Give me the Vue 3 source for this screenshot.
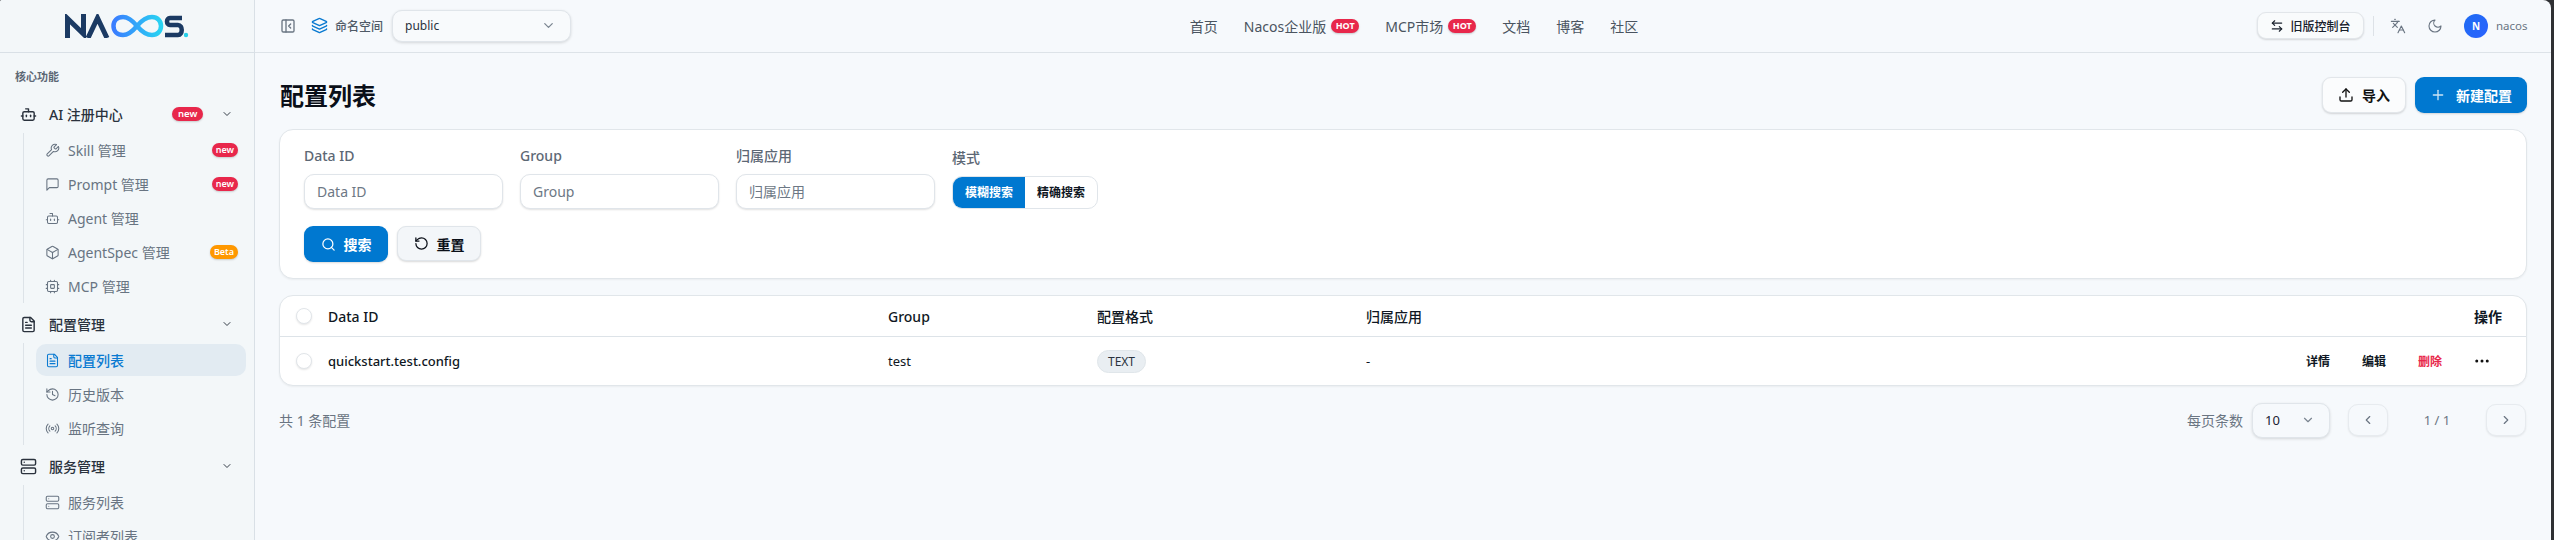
<script setup>
import { h } from 'vue'

const icons = {
  panel: '<rect x="3" y="3" width="18" height="18" rx="2"/><path d="M9 3v18"/><path d="m16 15-3-3 3-3"/>',
  layers: '<path d="M12.83 2.18a2 2 0 0 0-1.66 0L2.6 6.08a1 1 0 0 0 0 1.83l8.58 3.91a2 2 0 0 0 1.66 0l8.58-3.9a1 1 0 0 0 0-1.83z"/><path d="M2 12a1 1 0 0 0 .58.91l8.6 3.91a2 2 0 0 0 1.65 0l8.58-3.9A1 1 0 0 0 22 12"/><path d="M2 17a1 1 0 0 0 .58.91l8.6 3.91a2 2 0 0 0 1.65 0l8.58-3.9A1 1 0 0 0 22 17"/>',
  bot: '<path d="M12 8V4H8"/><rect x="4" y="8" width="16" height="12" rx="2"/><path d="M2 14h2"/><path d="M20 14h2"/><path d="M15 13v2"/><path d="M9 13v2"/>',
  wrench: '<path d="M14.7 6.3a1 1 0 0 0 0 1.4l1.6 1.6a1 1 0 0 0 1.4 0l3.77-3.77a6 6 0 0 1-7.94 7.94l-6.91 6.91a2.12 2.12 0 0 1-3-3l6.91-6.91a6 6 0 0 1 7.94-7.94l-3.76 3.76z"/>',
  message: '<path d="M21 15a2 2 0 0 1-2 2H7l-4 4V5a2 2 0 0 1 2-2h14a2 2 0 0 1 2 2z"/>',
  box: '<path d="M21 8a2 2 0 0 0-1-1.73l-7-4a2 2 0 0 0-2 0l-7 4A2 2 0 0 0 3 8v8a2 2 0 0 0 1 1.73l7 4a2 2 0 0 0 2 0l7-4A2 2 0 0 0 21 16Z"/><path d="m3.3 7 8.7 5 8.7-5"/><path d="M12 22V12"/>',
  cpu: '<rect x="4" y="4" width="16" height="16" rx="2"/><rect x="9" y="9" width="6" height="6" rx="1"/><path d="M15 2v2M15 20v2M2 15h2M2 9h2M20 15h2M20 9h2M9 2v2M9 20v2"/>',
  file: '<path d="M15 2H6a2 2 0 0 0-2 2v16a2 2 0 0 0 2 2h12a2 2 0 0 0 2-2V7Z"/><path d="M14 2v4a2 2 0 0 0 2 2h4"/><path d="M10 9H8"/><path d="M16 13H8"/><path d="M16 17H8"/>',
  history: '<path d="M3 12a9 9 0 1 0 9-9 9.75 9.75 0 0 0-6.74 2.74L3 8"/><path d="M3 3v5h5"/><path d="M12 7v5l4 2"/>',
  radio: '<path d="M4.9 19.1C1 15.2 1 8.8 4.9 4.9"/><path d="M7.8 16.2c-2.3-2.3-2.3-6.1 0-8.5"/><circle cx="12" cy="12" r="2"/><path d="M16.2 7.8c2.3 2.3 2.3 6.1 0 8.5"/><path d="M19.1 4.9C23 8.8 23 15.1 19.1 19"/>',
  server: '<rect x="2" y="2" width="20" height="8" rx="2"/><rect x="2" y="14" width="20" height="8" rx="2"/><path d="M6 6h.01"/><path d="M6 18h.01"/>',
  eye: '<path d="M2.062 12.348a1 1 0 0 1 0-.696 10.75 10.75 0 0 1 19.876 0 1 1 0 0 1 0 .696 10.75 10.75 0 0 1-19.876 0"/><circle cx="12" cy="12" r="3"/>',
  down: '<path d="m6 9 6 6 6-6"/>',
  left: '<path d="m15 18-6-6 6-6"/>',
  right: '<path d="m9 18 6-6-6-6"/>',
  swap: '<path d="M8 3 4 7l4 4"/><path d="M4 7h16"/><path d="m16 21 4-4-4-4"/><path d="M20 17H4"/>',
  lang: '<path d="m5 8 6 6"/><path d="m4 14 6-6 2-3"/><path d="M2 5h12"/><path d="M7 2h1"/><path d="m22 22-5-10-5 10"/><path d="M14 18h6"/>',
  moon: '<path d="M12 3a6 6 0 0 0 9 9 9 9 0 1 1-9-9Z"/>',
  upload: '<path d="M21 15v4a2 2 0 0 1-2 2H5a2 2 0 0 1-2-2v-4"/><path d="m17 8-5-5-5 5"/><path d="M12 3v12"/>',
  plus: '<path d="M5 12h14"/><path d="M12 5v14"/>',
  search: '<path d="m21 21-4.34-4.34"/><circle cx="11" cy="11" r="8"/>',
  reset: '<path d="M3 12a9 9 0 1 0 9-9 9.75 9.75 0 0 0-6.74 2.74L3 8"/><path d="M3 3v5h5"/>',
  dots: '<circle cx="12" cy="12" r="1"/><circle cx="19" cy="12" r="1"/><circle cx="5" cy="12" r="1"/>'
}

const Icon = (props) =>
  h('svg', {
    viewBox: '0 0 24 24',
    width: props.size || 16,
    height: props.size || 16,
    fill: 'none',
    stroke: 'currentColor',
    'stroke-width': props.sw || 2,
    'stroke-linecap': 'round',
    'stroke-linejoin': 'round',
    style: { flex: 'none', display: 'block' },
    innerHTML: icons[props.name]
  })
Icon.props = ['name', 'size', 'sw']

const groups = [
  {
    title: 'AI 注册中心', icon: 'bot', badge: 'new',
    items: [
      { label: 'Skill 管理', icon: 'wrench', badge: 'new' },
      { label: 'Prompt 管理', icon: 'message', badge: 'new' },
      { label: 'Agent 管理', icon: 'bot' },
      { label: 'AgentSpec 管理', icon: 'box', badge: 'Beta' },
      { label: 'MCP 管理', icon: 'cpu' }
    ]
  },
  {
    title: '配置管理', icon: 'file',
    items: [
      { label: '配置列表', icon: 'file', active: true },
      { label: '历史版本', icon: 'history' },
      { label: '监听查询', icon: 'radio' }
    ]
  },
  {
    title: '服务管理', icon: 'server',
    items: [
      { label: '服务列表', icon: 'server' },
      { label: '订阅者列表', icon: 'eye' }
    ]
  }
]

const navLinks = [
  { label: '首页' },
  { label: 'Nacos企业版', hot: true },
  { label: 'MCP市场', hot: true },
  { label: '文档' },
  { label: '博客' },
  { label: '社区' }
]

const fields = ['Data ID', 'Group', '归属应用']
</script>

<template>
  <div class="shell">
    <div class="window">
      <aside class="sidebar">
        <div class="logo">
          <svg width="124" height="24" viewBox="0 0 124 24" fill="none" aria-label="Nacos">
            <defs>
              <linearGradient id="inf" x1="0" y1="0" x2="1" y2="0">
                <stop offset="0" stop-color="#3a7dff" />
                <stop offset="1" stop-color="#28d3f2" />
              </linearGradient>
            </defs>
            <path d="M2.500 24V4.500L18.500 20V0" stroke="#1b3a63" stroke-width="5" />
            <path d="M23 24 32.500 4 42 24" stroke="#1b3a63" stroke-width="5" />
            <path d="M72 12C67 6 63 3 58 3 52 3 48.500 7 48.500 12S52 21 58 21C63 21 67 18 72 12S81 3 87 3C92.500 3 96 7 96 12S92.500 21 87 21C81 21 77 18 72 12Z" stroke="url(#inf)" stroke-width="4.500" />
            <path d="M117 4H105C101 4 101 11 105 11H113C118 11 118 21 113 21H100" stroke="#1b3a63" stroke-width="4.500" />
            <circle cx="121" cy="21" r="2.200" fill="#26cfe8" />
          </svg>
        </div>
        <div class="side-label">核心功能</div>
        <nav class="menu">
          <section v-for="g in groups" :key="g.title" class="group">
            <div class="group-head">
              <Icon :name="g.icon" :size="17" />
              <span class="group-title">{{ g.title }}</span>
              <span v-if="g.badge" class="badge badge-lg">{{ g.badge }}</span>
              <Icon name="down" :size="12" class="caret" />
            </div>
            <ul class="sub">
              <li v-for="it in g.items" :key="it.label" class="sub-item" :class="{ active: it.active }">
                <Icon :name="it.icon" :size="15" :sw="1.700" />
                <span class="sub-label">{{ it.label }}</span>
                <span v-if="it.badge" class="badge" :class="{ beta: it.badge === 'Beta' }">{{ it.badge }}</span>
              </li>
            </ul>
          </section>
        </nav>
      </aside>

      <div class="main">
        <header class="topbar">
          <div class="top-left">
            <Icon name="panel" :size="16" class="muted-icon" />
            <Icon name="layers" :size="17" class="blue-icon" />
            <span class="ns-label">命名空间</span>
            <div class="ns-select">
              <span>public</span>
              <Icon name="down" :size="15" class="select-caret" />
            </div>
          </div>
          <nav class="top-nav">
            <a v-for="l in navLinks" :key="l.label" class="top-link">
              {{ l.label }}<span v-if="l.hot" class="hot">HOT</span>
            </a>
          </nav>
          <div class="top-right">
            <button class="old-btn"><Icon name="swap" :size="14" />旧版控制台</button>
            <span class="divider"></span>
            <Icon name="lang" :size="16" :sw="1.700" class="muted-icon lang" />
            <Icon name="moon" :size="16" :sw="1.700" class="muted-icon moon" />
            <span class="avatar">N</span>
            <span class="user">nacos</span>
          </div>
        </header>

        <main class="content">
          <div class="page-head">
            <h1>配置列表</h1>
            <div class="page-actions">
              <button class="btn btn-light"><Icon name="upload" :size="16" />导入</button>
              <button class="btn btn-primary"><Icon name="plus" :size="16" class="plus" />新建配置</button>
            </div>
          </div>

          <section class="card filter">
            <div class="fields">
              <label v-for="f in fields" :key="f" class="field">
                <span class="field-label">{{ f }}</span>
                <input class="input" :placeholder="f" />
              </label>
              <div class="field mode">
                <span class="field-label">模式</span>
                <div class="seg">
                  <span class="seg-item on">模糊搜索</span>
                  <span class="seg-item">精确搜索</span>
                </div>
              </div>
            </div>
            <div class="filter-actions">
              <button class="btn btn-primary btn-search"><Icon name="search" :size="15" />搜索</button>
              <button class="btn btn-reset"><Icon name="reset" :size="15" />重置</button>
            </div>
          </section>

          <section class="card table">
            <div class="row row-head">
              <span class="check"></span>
              <span class="c-id">Data ID</span>
              <span class="c-group">Group</span>
              <span class="c-format">配置格式</span>
              <span class="c-app">归属应用</span>
              <span class="c-op">操作</span>
            </div>
            <div class="row row-body">
              <span class="check"></span>
              <span class="c-id strong">quickstart.test.config</span>
              <span class="c-group">test</span>
              <span class="c-format"><span class="tag">TEXT</span></span>
              <span class="c-app">-</span>
              <span class="c-actions">
                <a>详情</a><a>编辑</a><a class="danger">删除</a>
                <Icon name="dots" :size="18" class="more" />
              </span>
            </div>
          </section>

          <div class="pager">
            <span class="total">共 1 条配置</span>
            <div class="pager-right">
              <span class="total">每页条数</span>
              <div class="size-select"><span>10</span><Icon name="down" :size="14" class="select-caret" /></div>
              <button class="page-btn first"><Icon name="left" :size="14" /></button>
              <span class="page-num">1 / 1</span>
              <button class="page-btn"><Icon name="right" :size="14" /></button>
            </div>
          </div>
        </main>
      </div>
    </div>
  </div>
</template>

<style>
html, body { margin: 0; background: #2f3033; overflow: hidden; }
</style>

<style scoped>
* { box-sizing: border-box; }
.shell {
  width: 2554px; height: 540px; background: #2f3033; overflow: hidden;
  font-family: "Noto Sans", "Noto Sans CJK SC", sans-serif; color: #0f1723;
}
.window {
  width: 2551px; height: 540px; display: flex; background: #f6f9fc;
  border-top-right-radius: 8px; border-top-left-radius: 2px; overflow: hidden;
}
.sidebar { width: 255px; flex: none; background: #f3f7f9; border-right: 1px solid #d9e0e6; overflow: hidden; }
.logo { height: 53px; border-bottom: 1px solid #d9e0e6; display: flex; align-items: center; padding: 0 0 1px 65px; }
.side-label { height: 14px; margin: 17px 0 0 15px; font-size: 11px; line-height: 14px; font-weight: 700; color: #5d6875; }
.menu { margin-top: 11px; }
.group + .group { margin-top: 2px; }
.group-head { height: 38px; display: flex; align-items: center; padding-left: 20px; color: #2a323d; font-size: 14px; font-weight: 500; }
.group-title { margin-left: 12px; flex: 1; }
.caret { margin-right: 21px; color: #333c47; margin-left: 18px; }
.sub {
  list-style: none; margin: 0 0 0 23px; padding: 1px 8px 1px 12px; border-left: 1px solid #dde3e8;
  display: flex; flex-direction: column; gap: 2px;
}
.sub-item {
  height: 32px; border-radius: 10px; display: flex; align-items: center;
  padding: 0 8px 0 9px; gap: 8px; color: #687482; font-size: 14px;
}
.sub-label { flex: 1; white-space: nowrap; }
.sub-item.active { background: #e2ebf2; color: #0a7ad1; font-weight: 500; }
.badge {
  height: 14px; padding: 0 4px; border-radius: 7px; background: #e8274b; color: #fff;
  font-size: 9px; line-height: 13px; font-weight: 600; box-shadow: 0 1px 2px rgba(0,0,0,.18);
}
.badge.beta { background: #ff9800; }
.badge-lg { padding: 0 6px; width: 31px; font-size: 9.500px; text-align: center; }

.main { flex: 1; min-width: 0; display: flex; flex-direction: column; }
.topbar {
  height: 53px; flex: none; border-bottom: 1px solid #dde3e8; display: flex; align-items: center;
  justify-content: space-between; padding: 0 24px 1px 25px;
}
.top-left, .top-right, .top-nav { display: flex; align-items: center; }
.muted-icon { color: #6a7582; }
.blue-icon { color: #0a7ad1; margin-left: 15px; }
.ns-label { margin-left: 7px; font-size: 12px; font-weight: 500; color: #4f5a66; }
.ns-select {
  width: 179px; height: 32px; margin-left: 9px; border: 1px solid #e0e5ea; border-radius: 10px; background: #f8fafc;
  box-shadow: 0 1px 3px rgba(0,0,0,.14); display: flex; align-items: center; justify-content: space-between;
  padding: 0 14px 0 12px; font-size: 12px; color: #2a323d;
}
.select-caret { color: #7b8591; }
.top-nav { gap: 26px; }
.top-link { display: flex; align-items: center; font-size: 14px; color: #4a5460; white-space: nowrap; }
.hot {
  margin-left: 5px; width: 28px; height: 14px; border-radius: 7px; background: #e8274b; color: #fff; font-size: 9px;
  font-weight: 700; line-height: 14px; text-align: center; box-shadow: 0 1px 2px rgba(0,0,0,.2);
}
.old-btn {
  width: 107px; height: 27px; display: flex; align-items: center; justify-content: center; gap: 6px;
  border: 1px solid #e2e6ea; border-radius: 9px; background: #f9fbfc; box-shadow: 0 1px 2px rgba(0,0,0,.14);
  font: 500 12px "Noto Sans", "Noto Sans CJK SC", sans-serif; color: #19212c; padding: 0;
}
.divider { width: 1px; height: 20px; background: #dde2e7; margin: 0 16px 0 9px; }
.moon { margin-left: 21px; }
.avatar {
  width: 24px; height: 24px; margin-left: 21px; border-radius: 50%; background: linear-gradient(135deg, #1e6cf2, #2b62ff);
  color: #fff; font-size: 10px; font-weight: 700; line-height: 24px; text-align: center;
}
.user { margin-left: 8px; font-size: 11.500px; color: #6a7582; width: 31px; }

.content { flex: 1; padding: 24px 24px 0; min-height: 0; }
.page-head { height: 36px; display: flex; align-items: center; justify-content: space-between; }
h1 { margin: 2px 0 0 1px; font-size: 24px; font-weight: 700; color: #0a0f18; line-height: 34px; }
.page-actions { display: flex; gap: 9px; }
.btn {
  display: flex; align-items: center; justify-content: center; gap: 8px; border-radius: 9px; padding: 0;
  font: 600 14px "Noto Sans", "Noto Sans CJK SC", sans-serif; cursor: pointer;
}
.page-actions .btn { height: 36px; }
.btn-light { width: 84px; background: #fbfcfd; border: 1px solid #e2e6ea; box-shadow: 0 1px 2px rgba(0,0,0,.15); color: #111; }
.btn-primary { width: 112px; background: #0078d0; border: 0; color: #fff; box-shadow: 0 1px 2px rgba(0,0,0,.15); }
.plus { opacity: .8; margin-right: 2px; }
.card { background: #fff; border: 1px solid #e1e6ea; border-radius: 14px; box-shadow: 0 1px 2px rgba(0,0,0,.05); }
.filter { height: 150px; margin-top: 16px; padding: 16px 24px 0; }
.fields { display: flex; gap: 17px; align-items: flex-start; }
.field { width: 199px; display: block; }
.field-label { display: block; height: 20px; line-height: 20px; font-size: 14px; font-weight: 500; color: #5d6875; }
.input {
  display: block; margin-top: 8px; width: 100%; height: 35px; padding: 0 12px; border: 1px solid #e0e5ea; border-radius: 10px;
  background: #fff; box-shadow: 0 1px 2px rgba(0,0,0,.12); font: 14px "Noto Sans", "Noto Sans CJK SC", sans-serif; outline: none;
}
.input::placeholder { color: #6d7885; opacity: 1; }
.mode { width: auto; padding-top: 2px; }
.seg { display: flex; margin-top: 8px; width: 146px; height: 33px; border: 1px solid #e0e5ea; border-radius: 10px; overflow: hidden; }
.seg-item { width: 72px; flex: 1; font-size: 12px; font-weight: 600; line-height: 31px; text-align: center; color: #0f1723; }
.seg-item.on { background: #0078d0; color: #fff; }
.filter-actions { display: flex; gap: 9px; margin-top: 17px; }
.filter-actions .btn { width: 84px; height: 36px; }
.btn-reset { background: #f3f6f9; border: 1px solid #e0e5ea; box-shadow: 0 1px 2px rgba(0,0,0,.15); color: #0a0f18; height: 35px !important; }

.table { margin-top: 16px; height: 91px; overflow: hidden; }
.row { display: flex; align-items: center; font-size: 13px; }
.row-head { height: 41px; border-bottom: 1px solid #dde3e8; font-size: 14px; font-weight: 500; }
.row-body { height: 48px; }
.check { width: 16px; height: 16px; margin-left: 16px; border-radius: 50%; border: 1px solid #e1e5e9; background: #fff; box-shadow: 0 1px 2px rgba(0,0,0,.1); flex: none; }
.c-id { margin-left: 16px; width: 560px; flex: none; }
.strong { font-weight: 500; }
.c-group { width: 209px; flex: none; }
.c-format { width: 269px; flex: none; }
.c-app { flex: 1; }
.c-op { margin-right: 24px; font-weight: 600; }
.tag {
  display: inline-block; width: 49px; height: 23px; border-radius: 12px; background: #e9eef2; border: 1px solid #e0e6ea;
  font-size: 12px; line-height: 21px; text-align: center; color: #2a323d;
}
.c-actions { display: flex; align-items: center; gap: 32px; font-size: 12px; font-weight: 600; margin-right: 35px; }
.danger { color: #e8274b; }
.more { margin-left: -1px; color: #111; }
.pager { display: flex; align-items: center; justify-content: space-between; height: 36px; margin-top: 16px; padding-right: 1px; }
.total { font-size: 14px; color: #6a7582; }
.pager-right { display: flex; align-items: center; }
.size-select {
  width: 78px; height: 35px; margin-left: 9px; border: 1px solid #e0e5ea; border-radius: 10px; background: #f6f9fc;
  box-shadow: 0 1px 3px rgba(0,0,0,.14); display: flex; align-items: center; justify-content: space-between;
  padding: 0 14px 0 12px; font-size: 13px; color: #1a2233;
}
.page-btn {
  width: 40px; height: 32px; border: 1px solid #e7ebef; border-radius: 10px; background: #f6f9fc;
  box-shadow: 0 1px 2px rgba(0,0,0,.08); display: flex; align-items: center; justify-content: center; color: #6a7582; padding: 0;
}
.first { margin-left: 18px; }
.page-num { width: 98px; text-align: center; font-size: 13px; color: #6a7582; }
</style>
